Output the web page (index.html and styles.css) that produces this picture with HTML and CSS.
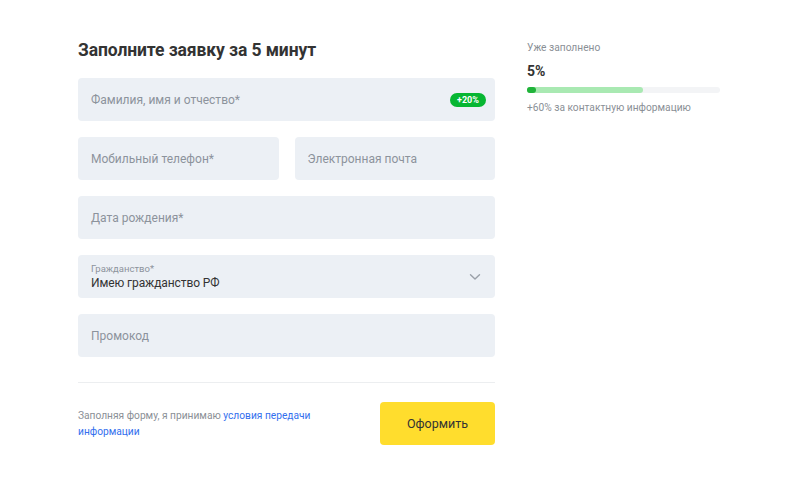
FILE: index.html
```html
<!DOCTYPE html>
<html lang="ru">
<head>
<meta charset="utf-8">
<title>Заявка</title>
<link rel="stylesheet" href="styles.css">
</head>
<body>
<div class="page">
  <main class="form">
    <h1 class="title">Заполните заявку за 5 минут</h1>
    <div class="field">
      <span class="placeholder">Фамилия, имя и отчество*</span>
      <span class="badge">+20%</span>
    </div>
    <div class="row">
      <div class="field"><span class="placeholder">Мобильный телефон*</span></div>
      <div class="field"><span class="placeholder">Электронная почта</span></div>
    </div>
    <div class="field"><span class="placeholder">Дата рождения*</span></div>
    <div class="field select">
      <div class="select-text">
        <span class="label">Гражданство*</span>
        <span class="value">Имею гражданство РФ</span>
      </div>
      <svg class="chevron" width="12" height="8" viewBox="0 0 12 8"><path d="M1.5 1.8 L6 6 L10.5 1.8" fill="none" stroke="#9aa0a8" stroke-width="1.4" stroke-linecap="round" stroke-linejoin="round"/></svg>
    </div>
    <div class="field"><span class="placeholder">Промокод</span></div>
    <hr class="divider">
    <div class="footer">
      <p class="terms"><span>Заполняя форму, я принимаю</span> <a href="#">условия передачи</a><br><a href="#">информации</a></p>
      <button class="submit" type="button">Оформить</button>
    </div>
  </main>
  <aside class="progress">
    <div class="progress-label">Уже заполнено</div>
    <div class="progress-value">5%</div>
    <div class="bar">
      <div class="bar-potential" style="width:60%"></div>
      <div class="bar-current"></div>
    </div>
    <div class="progress-hint">+60% за контактную информацию</div>
  </aside>
</div>
</body>
</html>
```
FILE: styles.css
```css
* { box-sizing: border-box; }
html, body { margin: 0; padding: 0; background: #fff; }
body {
  font-family: Roboto, "Liberation Sans", Arial, sans-serif;
  color: #333;
  width: 800px;
  height: 490px;
}
.page {
  display: flex;
  align-items: flex-start;
  padding: 38px 0 0 78px;
  gap: 32px;
}
.form {
  width: 417px;
  display: flex;
  flex-direction: column;
  gap: 16px;
}
.title {
  margin: 0;
  font-size: 17.5px;
  line-height: 24px;
  font-weight: 700;
  color: #333;
  letter-spacing: -0.1px;
}
.row {
  display: flex;
  gap: 16px;
}
.row .field { flex: 1; }
.field {
  height: 43px;
  background: #ecf0f5;
  border-radius: 4px;
  display: flex;
  align-items: center;
  justify-content: space-between;
  padding: 0 9px 0 13px;
}
.placeholder {
  font-size: 12px;
  color: #8c939c;
}
.badge {
  height: 14px;
  line-height: 14px;
  padding: 0 6px;
  border-radius: 7px;
  background: #07b632;
  color: #fff;
  font-size: 9px;
  font-weight: 700;
  width: 36px;
  text-align: center;
}
.select { padding-right: 14px; }
.select-text {
  display: flex;
  flex-direction: column;
  padding-top: 1px;
}
.label {
  font-size: 9.5px;
  line-height: 12px;
  color: #8c939c;
}
.value {
  font-size: 12px;
  line-height: 16px;
  color: #333;
  letter-spacing: -0.1px;
}
.divider {
  margin: 9px 0 3px 0;
  border: 0;
  border-top: 1px solid #eceef0;
  height: 0;
}
.footer {
  display: flex;
  align-items: center;
  justify-content: space-between;
}
.terms {
  margin: 0;
  width: 240px;
  font-size: 10.2px;
  line-height: 16px;
  color: #8a8f96;
}
.terms a {
  color: #336fee;
  text-decoration: none;
}
.submit {
  width: 115px;
  height: 43px;
  border: 0;
  border-radius: 4px;
  background: #ffdd2d;
  font-family: inherit;
  font-size: 12.5px;
  color: #333;
  cursor: pointer;
}
.progress {
  width: 193px;
  display: flex;
  flex-direction: column;
  padding-top: 2px;
}
.progress-label {
  font-size: 10.2px;
  line-height: 16px;
  color: #8a8f96;
}
.progress-value {
  margin-top: 6px;
  font-size: 14px;
  line-height: 18px;
  font-weight: 700;
  color: #333;
}
.bar {
  position: relative;
  margin-top: 7px;
  height: 6px;
  border-radius: 3px;
  background: #f3f4f6;
}
.bar-potential {
  position: absolute;
  left: 0; top: 0; bottom: 0;
  border-radius: 3px;
  background: #a9e9b2;
}
.bar-current {
  position: absolute;
  left: 0; top: 0; bottom: 0;
  width: 9px;
  border-radius: 3px;
  background: #20b33a;
}
.progress-hint {
  margin-top: 7px;
  font-size: 10.2px;
  line-height: 16px;
  color: #8a8f96;
}
```
